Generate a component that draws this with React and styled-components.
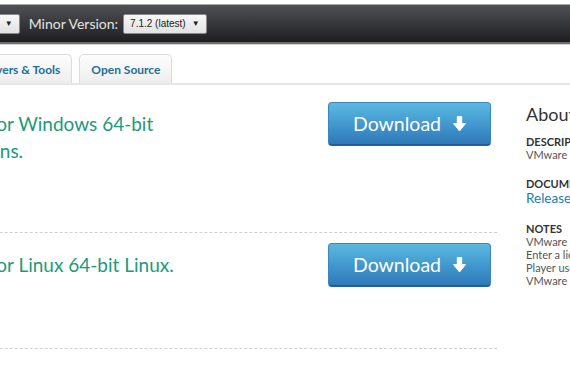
import React from 'react';
import styled, { createGlobalStyle } from 'styled-components';

const GlobalStyle = createGlobalStyle`
  * {
    margin: 0;
    padding: 0;
    box-sizing: border-box;
  }

  body {
    background: #fff;
    font-family: Lato, "Liberation Sans", sans-serif;
    overflow: hidden;
  }
`;

// the page is scrolled to the right, so its left part lies outside the window
const Viewport = styled.div`
  width: 570px;
  height: 365px;
  overflow: hidden;
  padding-top: 4px;
`;

const Page = styled.div`
  width: 1000px;
  margin-left: -200px;
`;

const TopBar = styled.div`
  height: 40px;
  display: flex;
  align-items: center;
  gap: 5px;
  padding-left: 51px;
  background: linear-gradient(#505155, #1e1e1f);
  border-top: 1px solid #a8a8a8;
  border-bottom: 2px solid #6d6d6d;
  box-shadow: 0 1px 0 #d6d6d6;
`;

const BarLabel = styled.span`
  color: #e4e4e4;
  font-size: 14px;
  margin-left: ${p => p.$space || 0}px;
`;

const Select = styled.div`
  height: 20px;
  display: flex;
  align-items: center;
  gap: 6px;
  padding: 0 6px;
  background: linear-gradient(#f7f7f7, #e2e2e2);
  border: 1px solid #8a8a8a;
  border-radius: 2px;
  color: #222;
  font-size: 10px;
  font-family: "Liberation Sans", Arial, sans-serif;
`;

const Caret = styled.span`
  font-size: 8px;
`;

const Tabs = styled.div`
  display: flex;
  gap: 7px;
  margin-top: 10px;
  padding-left: 31px;
  border-bottom: 2px solid #e6e6e6;
`;

const Tab = styled.div`
  height: 29px;
  display: flex;
  align-items: center;
  padding: 0 11px;
  background: linear-gradient(#fdfdfd, #eeeeee);
  border: 1px solid #dcdcdc;
  border-bottom: none;
  border-radius: 5px 5px 0 0;
  color: #1f6e99;
  font-size: 12px;
  font-weight: 700;
`;

const Body = styled.div`
  display: flex;
  gap: 29px;
`;

const Main = styled.div`
  width: 697px;
`;

const Row = styled.div`
  display: flex;
  justify-content: space-between;
  align-items: flex-start;
  height: ${p => p.$h}px;
  padding: ${p => p.$top}px 6px 0 0;
  border-bottom: 1px dashed #cfcfcf;
`;

const Title = styled.div`
  padding: 8px 0 0 11px;
  color: #209a7b;
  font-size: 19px;
  line-height: 27px;
`;

const DownloadButton = styled.button`
  width: 163px;
  height: 44px;
  display: flex;
  align-items: center;
  justify-content: center;
  gap: 12px;
  background: linear-gradient(#5bb9e0, #3a8cc7 70%, #2f79b7);
  border: 1px solid #3a87c0;
  border-bottom: 2px solid #245e98;
  border-radius: 4px;
  color: #fff;
  font-family: Lato, "Liberation Sans", sans-serif;
  font-size: 19.5px;
  cursor: pointer;
`;

const Aside = styled.div`
  width: 220px;
  padding-top: 18px;
  color: #555;
`;

const AsideTitle = styled.h3`
  font-size: 18px;
  font-weight: 400;
  color: #333;
  margin-bottom: 10px;
`;

const Label = styled.div`
  font-size: 11px;
  font-weight: 700;
  color: #333;
  line-height: 13px;
`;

const Block = styled.div`
  margin-bottom: 16px;
  font-size: 11px;
  line-height: 13px;
`;

const Link = styled.a`
  color: #1b7db6;
  font-size: 13.5px;
  line-height: 16px;
  text-decoration: none;
`;

const ArrowDown = () => (
  <svg width="13" height="16" viewBox="0 0 13 16">
    <path d="M4.3 0.5 H8.7 V7.5 H12.5 L6.5 15 L0.5 7.5 H4.3 Z" fill="#fff" strokeLinejoin="round" stroke="#fff" strokeWidth="1" />
  </svg>
);

export default function App() {
  return (
    <>
      <GlobalStyle />
      <Viewport>
        <Page>
          <TopBar>
            <BarLabel>Major Version:</BarLabel>
            <Select>7.0 (latest)<Caret>▼</Caret></Select>
            <BarLabel $space={4}>Minor Version:</BarLabel>
            <Select>7.1.2 (latest)<Caret>▼</Caret></Select>
          </TopBar>
          <Tabs>
            <Tab>Product Downloads</Tab>
            <Tab>Drivers &amp; Tools</Tab>
            <Tab>Open Source</Tab>
          </Tabs>
          <Body>
            <Main>
              <Row $h={148} $top={17}>
                <Title>
                  VMware Player 7.1.2 for Windows 64-bit
                  <br />
                  operating system actions.
                </Title>
                <DownloadButton>Download <ArrowDown /></DownloadButton>
              </Row>
              <Row $h={116} $top={10}>
                <Title>VMware Player 7.1.2 for Linux 64-bit Linux.</Title>
                <DownloadButton>Download <ArrowDown /></DownloadButton>
              </Row>
            </Main>
            <Aside>
              <AsideTitle>About</AsideTitle>
              <Block>
                <Label>DESCRIPTION</Label>
                VMware Player 7.1.2
              </Block>
              <Block>
                <Label>DOCUMENTATION</Label>
                <Link href="#">Release Notes</Link>
              </Block>
              <Block>
                <Label>NOTES</Label>
                VMware Player 7.1.2 is free for personal use.
                <br />
                Enter a license key to run Workstation.
                <br />
                Player used commercially requires a
                <br />
                VMware license.
              </Block>
            </Aside>
          </Body>
        </Page>
      </Viewport>
    </>
  );
}
